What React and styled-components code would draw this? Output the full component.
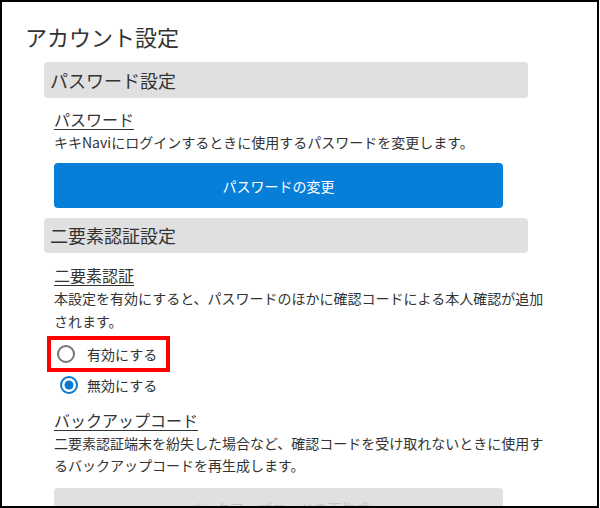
import React from 'react'
import styled, { createGlobalStyle } from 'styled-components'

const GlobalStyle = createGlobalStyle`
    html, body {
        margin: 0;
        padding: 0;
        background: #fff;
    }
    body {
        font-family: "Noto Sans CJK JP", "Noto Sans", sans-serif;
        color: #333;
    }
`

const Frame = styled.div`
    width: 599px;
    height: 508px;
    box-sizing: border-box;
    border: 2px solid #000;
    overflow: hidden;
    background: #fff;
`

const Title = styled.h1`
    margin: 19px 0 0 23px;
    font-size: 22px;
    font-weight: 400;
    line-height: 30px;
    color: #333;
`

const Content = styled.div`
    width: 484px;
    margin-left: 42px;
    margin-top: 11px;
`

const SectionHeader = styled.div`
    height: ${props => props.height || 36}px;
    margin-top: ${props => props.gap || 0}px;
    padding-left: 6px;
    background: #e0e0e0;
    border-radius: 4px;
    font-size: 18px;
    line-height: ${props => props.height || 36}px;
`

const Body = styled.div`
    padding-left: 10px;
    width: 449px;
`

const Label = styled.div`
    margin-top: ${props => props.gap || 0}px;
    font-size: 16px;
    line-height: 24px;
    text-decoration: underline;
    text-underline-offset: 3px;
    text-decoration-thickness: 1px;
`

const Desc = styled.p`
    margin: 0;
    width: 500px;
    font-size: 14px;
    line-height: ${props => props.lh || 22}px;
`

const Button = styled.button`
    display: block;
    width: 449px;
    height: 45px;
    margin-top: ${props => props.gap || 0}px;
    border: none;
    border-radius: 4px;
    font-family: inherit;
    font-size: 14px;
    background: ${props => props.disabled ? '#e0e0e0' : '#077ed8'};
    color: ${props => props.disabled ? '#c4c4c4' : '#fff'};
    padding: 0 0 ${props => props.disabled ? 6 : 0}px;
`

const RadioGroup = styled.div`
    margin-top: 3px;
    margin-left: -7px;
    display: flex;
    flex-direction: column;
`

const Option = styled.label`
    display: flex;
    align-items: center;
    box-sizing: border-box;
    width: 123px;
    height: ${props => props.highlighted ? 36 : 26}px;
    border: ${props => props.highlighted ? '4px solid #ff0000' : 'none'};
    padding-left: ${props => props.highlighted ? 6 : 13}px;
    gap: ${props => props.highlighted ? 12 : 9}px;
    font-size: 14px;
`

function Radio({ checked }) {
    return checked ? (
        <svg width="18" height="18" viewBox="0 0 18 18">
            <circle cx="9" cy="9" r="8" fill="#fff" stroke="#0b78d0" strokeWidth="2" />
            <circle cx="9" cy="9" r="4.5" fill="#0b78d0" />
        </svg>
    ) : (
        <svg width="18" height="18" viewBox="0 0 18 18">
            <circle cx="9" cy="9" r="8" fill="#fff" stroke="#767676" strokeWidth="2" />
        </svg>
    )
}

export default function App() {
    return (
        <>
            <GlobalStyle />
            <Frame>
                <Title>アカウント設定</Title>
                <Content>
                    <SectionHeader>パスワード設定</SectionHeader>
                    <Body>
                        <Label gap={9}>パスワード</Label>
                        <Desc>キキNaviにログインするときに使用するパスワードを変更します。</Desc>
                        <Button gap={10}>パスワードの変更</Button>
                    </Body>
                    <SectionHeader gap={10} height={35}>二要素認証設定</SectionHeader>
                    <Body>
                        <Label gap={10}>二要素認証</Label>
                        <Desc lh={23}>本設定を有効にすると、パスワードのほかに確認コードによる本人確認が追加されます。</Desc>
                        <RadioGroup>
                            <Option highlighted><Radio /><span>有効にする</span></Option>
                            <Option><Radio checked /><span>無効にする</span></Option>
                        </RadioGroup>
                        <Label gap={10}>バックアップコード</Label>
                        <Desc>二要素認証端末を紛失した場合など、確認コードを受け取れないときに使用するバックアップコードを再生成します。</Desc>
                        <Button gap={12} disabled>バックアップコードの再生成</Button>
                    </Body>
                </Content>
            </Frame>
        </>
    )
}
